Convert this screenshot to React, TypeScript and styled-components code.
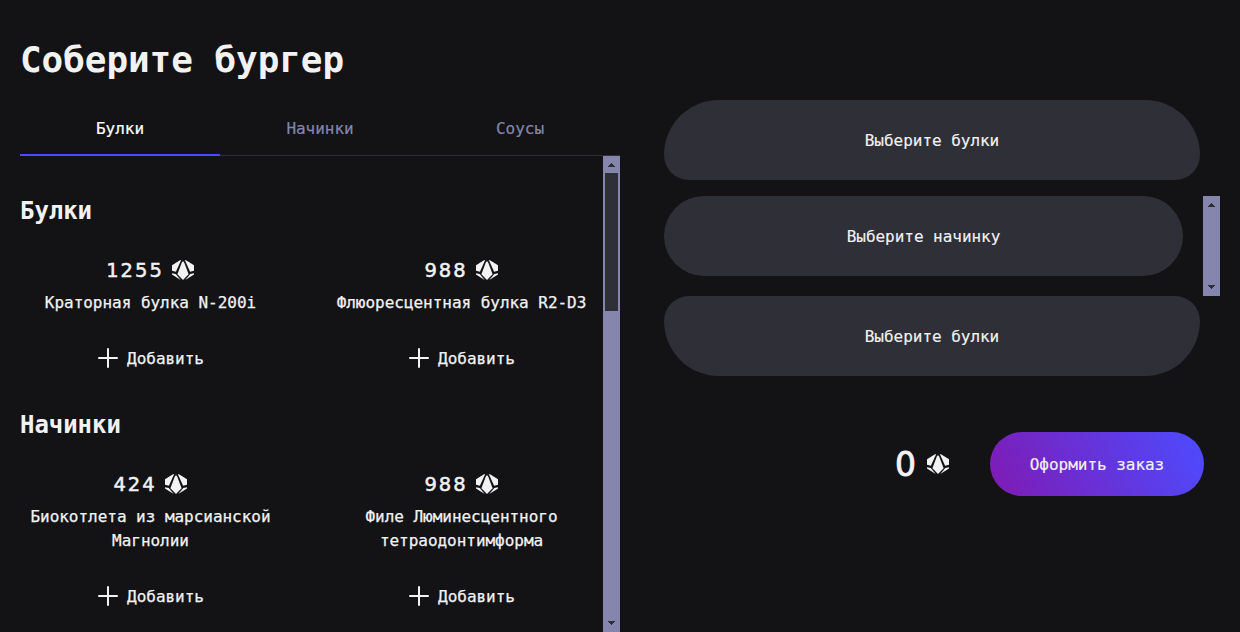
import React from "react";
import styled, { createGlobalStyle } from "styled-components";

const GlobalStyle = createGlobalStyle`
  * { box-sizing: border-box; }
  body {
    margin: 0;
    background: #131316;
    color: #f2f2f3;
    font: 400 16px/24px "DejaVu Sans Mono", monospace;
    letter-spacing: -0.03px;
    overflow: hidden;
  }
  svg { display: block; flex: none; }
`;

const Page = styled.main`
  display: flex;
  height: 632px;
  overflow: hidden;
  padding: 0 20px;
`;

const Ingredients = styled.section`
  display: flex;
  flex-direction: column;
  width: 600px;
  padding-top: 40px;
`;

const Title = styled.h1`
  margin: 0 0 20px;
  font-size: 36px;
  line-height: 40px;
  font-weight: 700;
  letter-spacing: -0.07px;
`;

const Tabs = styled.nav`
  display: flex;
`;

const Tab = styled.div<{ $active?: boolean }>`
  display: flex;
  align-items: center;
  justify-content: center;
  width: 200px;
  height: 56px;
  padding-top: 2px;
  color: ${(p) => (p.$active ? "#ffffff" : "#8585ad")};
  -webkit-text-stroke: 0.2px currentColor;
  box-shadow: inset 0 ${(p) => (p.$active ? "-2px #4c4cff" : "-1px #2f2f37")};
`;

const ScrollArea = styled.div`
  display: flex;
  height: 476px;
`;

const Groups = styled.div`
  flex: 1;
  overflow: hidden;
`;

const Group = styled.section`
  padding-top: 40px;
`;

const GroupTitle = styled.h2`
  margin: 0 0 32px;
  font-size: 24px;
  line-height: 30px;
  font-weight: 700;
  letter-spacing: -0.05px;
`;

const Cards = styled.div`
  display: grid;
  grid-template-columns: 260px 260px;
  column-gap: 51px;
`;

const Card = styled.article`
  display: flex;
  flex-direction: column;
  align-items: center;
  text-align: center;
`;

const Price = styled.div`
  display: flex;
  align-items: center;
  gap: 7px;
  height: 24px;
  padding-left: 1px;
  font: 400 19.5px/24px "DejaVu Sans", sans-serif;
  letter-spacing: 2px;
  -webkit-text-stroke: 0.5px #f2f2f3;
`;

const Amount = styled.span`
  padding-top: 2px;
`;

const Name = styled.div`
  padding-top: 9px;
  padding-left: 1px;
  -webkit-text-stroke: 0.25px #f2f2f3;
`;

const AddButton = styled.div`
  display: flex;
  align-items: center;
  gap: 7px;
  margin-top: 31px;
  -webkit-text-stroke: 0.25px #f2f2f3;
`;

const Label = styled.span`
  height: 24px;
  line-height: 26px;
`;

const Track = styled.div`
  display: flex;
  flex-direction: column;
  flex: none;
  width: 17px;
  background: #8585ad;
`;

const ArrowBox = styled.div`
  height: 17px;
  padding: 7px 5px 0;
  &:last-child { margin-top: auto; padding-top: 6px; }
`;

const Thumb = styled.div`
  height: 138px;
  margin: 0 2px;
  background: #2f2f37;
`;

const Constructor = styled.section`
  width: 600px;
  padding: 100px 0 0 44px;
`;

const Slot = styled.div<{ $kind: "top" | "middle" | "bottom" }>`
  display: flex;
  align-items: center;
  justify-content: center;
  width: ${(p) => (p.$kind === "middle" ? "519px" : "536px")};
  height: 80px;
  padding-top: 2px;
  background: #2f2f37;
  border-radius: ${(p) =>
    p.$kind === "top" ? "55px 55px 25px 25px" : p.$kind === "bottom" ? "25px 25px 55px 55px" : "40px"};
  -webkit-text-stroke: 0.15px #f2f2f3;
`;

const Fillings = styled.div`
  display: flex;
  justify-content: space-between;
  height: 100px;
  margin-top: 16px;
`;

const Order = styled.div`
  display: flex;
  align-items: center;
  justify-content: flex-end;
  margin-top: 56px;
  padding-right: 16px;
`;

const Total = styled.span`
  padding-top: 2px;
  margin-right: 10px;
  font: 400 33px/48px "DejaVu Sans", sans-serif;
  -webkit-text-stroke: 0.9px #f2f2f3;
`;

const OrderButton = styled.button`
  width: 214px;
  height: 64px;
  margin-left: 40px;
  padding: 2px 0 0;
  border: 0;
  border-radius: 32px;
  background: linear-gradient(63.18deg, #801ab3 0%, #4c4cff 100%);
  color: #f2f2f3;
  font: inherit;
  letter-spacing: inherit;
  -webkit-text-stroke: 0.15px #f2f2f3;
`;

const CurrencyIcon = () => (
  <svg width="24" height="24" viewBox="0 0 24 24" fill="#f2f2f3">
    <path d="M10.2 2 8.6 2.5 1 7.2v5.6l3.9 1L10.2 2Z" />
    <path d="m13.8 2 1.6.5L23 7.2v5.6l-3.9 1L13.8 2Z" />
    <path d="M12 3.6c-.7 0-1 .6-1.4 1.5L6.4 16.3 12 22l5.6-5.7-4.2-11.2C13 4.2 12.7 3.6 12 3.6Z" />
    <path d="m1 15.2 3.7.7 5 6.1L1 16.6v-1.4Z" />
    <path d="m23 15.2-3.7.7-5 6.1 8.7-5.4v-1.4Z" />
  </svg>
);

const PlusIcon = () => (
  <svg width="24" height="24" viewBox="0 0 24 24" fill="none" stroke="#f2f2f3" strokeWidth="2" strokeLinecap="round">
    <path d="M12 3v18M3 12h18" />
  </svg>
);

const Arrow = ({ down }: { down?: boolean }) => (
  <svg width="7" height="4" viewBox="0 0 7 4" fill="#2f2f37" shapeRendering="crispEdges">
    <path d={down ? "M0 0h7v1H6v1H5v1H4v1H3V3H2V2H1V1H0Z" : "M3 0h1v1h1v1h1v1h1v1H0V3h1V2h1V1h1Z"} />
  </svg>
);

const Scrollbar = ({ thumb }: { thumb?: boolean }) => (
  <Track>
    <ArrowBox><Arrow /></ArrowBox>
    {thumb && <Thumb />}
    <ArrowBox><Arrow down /></ArrowBox>
  </Track>
);

const groups = [
  {
    title: "Булки",
    items: [
      { name: "Краторная булка N-200i", price: 1255 },
      { name: "Флюоресцентная булка R2-D3", price: 988 },
    ],
  },
  {
    title: "Начинки",
    items: [
      { name: "Биокотлета из марсианской Магнолии", price: 424 },
      { name: "Филе Люминесцентного тетраодонтимформа", price: 988 },
    ],
  },
];

export default function App() {
  return (
    <>
      <GlobalStyle />
      <Page>
        <Ingredients>
          <Title>Соберите бургер</Title>
          <Tabs>
            <Tab $active>Булки</Tab>
            <Tab>Начинки</Tab>
            <Tab>Соусы</Tab>
          </Tabs>
          <ScrollArea>
            <Groups>
              {groups.map((group) => (
                <Group key={group.title}>
                  <GroupTitle>{group.title}</GroupTitle>
                  <Cards>
                    {group.items.map((item) => (
                      <Card key={item.name}>
                        <Price>
                          <Amount>{item.price}</Amount>
                          <CurrencyIcon />
                        </Price>
                        <Name>{item.name}</Name>
                        <AddButton>
                          <PlusIcon />
                          <Label>Добавить</Label>
                        </AddButton>
                      </Card>
                    ))}
                  </Cards>
                </Group>
              ))}
            </Groups>
            <Scrollbar thumb />
          </ScrollArea>
        </Ingredients>
        <Constructor>
          <Slot $kind="top">Выберите булки</Slot>
          <Fillings>
            <Slot $kind="middle">Выберите начинку</Slot>
            <Scrollbar />
          </Fillings>
          <Slot $kind="bottom">Выберите булки</Slot>
          <Order>
            <Total>0</Total>
            <CurrencyIcon />
            <OrderButton>Оформить заказ</OrderButton>
          </Order>
        </Constructor>
      </Page>
    </>
  );
}
